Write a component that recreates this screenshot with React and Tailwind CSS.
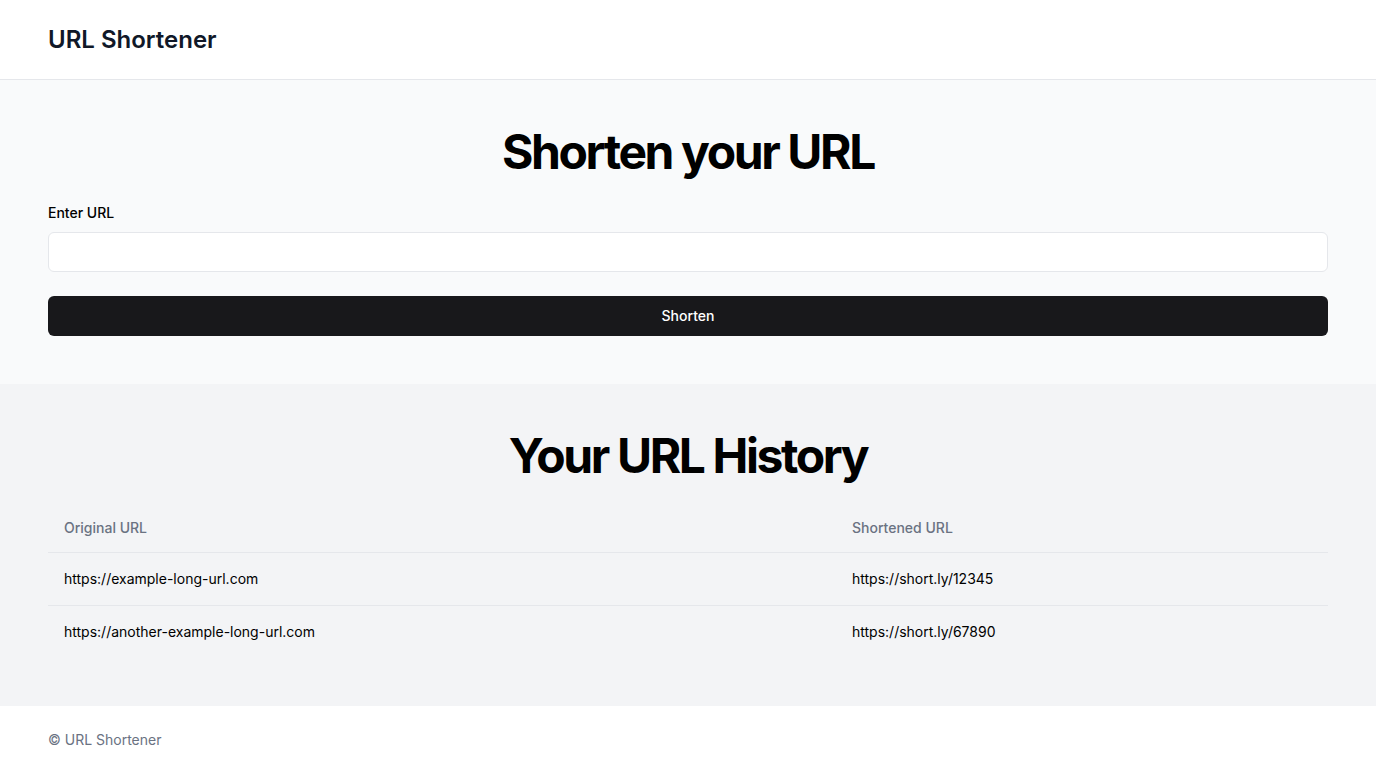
import React, { useState } from "react";

const history = [
    { original: "https://example-long-url.com", short: "https://short.ly/12345" },
    { original: "https://another-example-long-url.com", short: "https://short.ly/67890" },
];

const App = () => {
    const [url, setUrl] = useState("");

    return (
        <div className="min-h-screen flex flex-col bg-white text-gray-900 font-['Inter',sans-serif]">
            {/* Header */}
            <header className="h-20 flex items-center px-12 bg-white border-b border-gray-200 shadow-sm">
                <h1 className="text-2xl leading-8 font-semibold text-gray-900">URL Shortener</h1>
            </header>

            {/* Formulaire */}
            <section className="bg-gray-50 px-12 py-12">
                <h2 className="text-5xl leading-none font-bold tracking-tighter text-center text-black mb-6">
                    Shorten your URL
                </h2>
                <form onSubmit={(e) => e.preventDefault()}>
                    <label htmlFor="url" className="block text-sm leading-5 font-medium text-black pt-[3px]">
                        Enter URL
                    </label>
                    <input
                        id="url"
                        type="text"
                        value={url}
                        onChange={(e) => setUrl(e.target.value)}
                        className="mt-[9px] block w-full h-10 rounded-md border border-gray-200 bg-white px-3 text-sm outline-none"
                    />
                    <button
                        type="submit"
                        className="mt-6 w-full h-10 rounded-md bg-zinc-900 text-white text-sm font-medium"
                    >
                        Shorten
                    </button>
                </form>
            </section>

            {/* Historique */}
            <section className="bg-gray-100 px-12 py-12">
                <h2 className="text-5xl leading-none font-bold tracking-tighter text-center text-black mb-6">
                    Your URL History
                </h2>
                <table className="w-full text-sm">
                    <thead>
                        <tr className="border-b border-gray-200">
                            <th className="w-[788px] h-12 px-4 text-left align-middle font-medium text-gray-500">Original URL</th>
                            <th className="h-12 px-4 text-left align-middle font-medium text-gray-500">Shortened URL</th>
                        </tr>
                    </thead>
                    <tbody>
                        {history.map((item, index) => (
                            <tr
                                key={index}
                                className={index < history.length - 1 ? "border-b border-gray-200" : ""}
                            >
                                <td className="p-4 text-black">{item.original}</td>
                                <td className="p-4 text-black">{item.short}</td>
                            </tr>
                        ))}
                    </tbody>
                </table>
            </section>

            {/* Footer */}
            <footer className="bg-white px-12 py-6 flex-1">
                <p className="text-sm leading-5 text-gray-500">© URL Shortener</p>
            </footer>
        </div>
    );
};

export default App;
